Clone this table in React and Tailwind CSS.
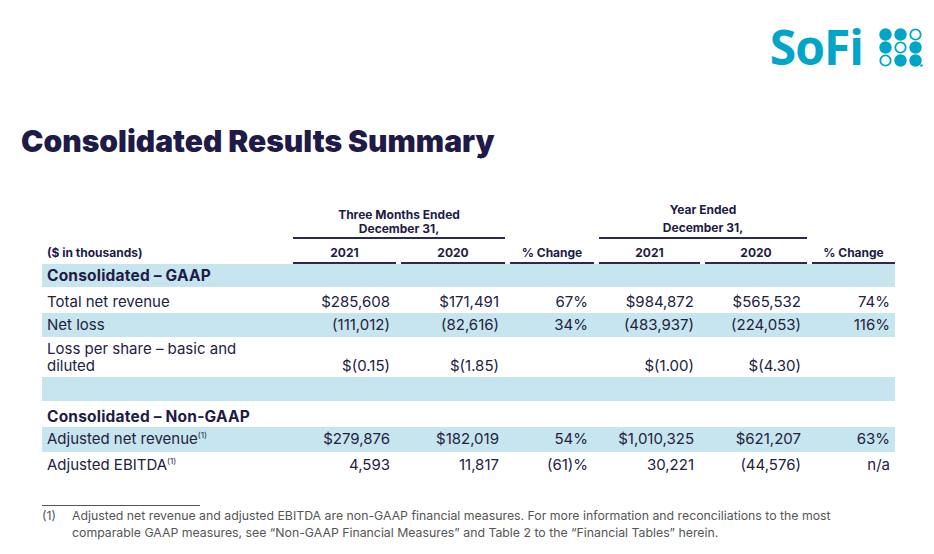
import React from 'react';

const grid = 'grid grid-cols-[246px_103px_104px_84px_101px_102px_83px] gap-x-[5px]';

const rows = [
  { label: 'Total net revenue', values: ['$285,608', '$171,491', '67%', '$984,872', '$565,532', '74%'], h: 'h-[26px] pt-[4px]' },
  { label: 'Net loss', values: ['(111,012)', '(82,616)', '34%', '(483,937)', '(224,053)', '116%'], blue: true, h: 'h-[24px] pt-[1px]' },
];

const nonGaap = [
  { label: 'Adjusted net revenue', sup: true, values: ['$279,876', '$182,019', '54%', '$1,010,325', '$621,207', '63%'], blue: true, h: 'h-[25px]' },
  { label: 'Adjusted EBITDA', sup: true, values: ['4,593', '11,817', '(61)%', '30,221', '(44,576)', 'n/a'], h: 'h-[25px] pt-[2px]' },
];

function Logo() {
  // 3x3 dot grid, o = outlined
  const dots = ['f', 'f', 'o', 'f', 'o', 'f', 'o', 'f', 'f'];
  return (
    <div className="flex items-center gap-[16px]">
      <span className="text-[#00a5c8] text-[48px] font-bold leading-none tracking-[-1px]" style={{ fontFamily: '"Open Sans", sans-serif' }}>
        SoFi
      </span>
      <svg width="44" height="39" viewBox="0 0 44 39">
        {dots.map((d, i) => {
          const cx = 6.5 + (i % 3) * 15;
          const cy = 6.5 + Math.floor(i / 3) * 13;
          return d === 'f' ? (
            <circle key={i} cx={cx} cy={cy} r="6.2" fill="#00a5c8" />
          ) : (
            <circle key={i} cx={cx} cy={cy} r="5.2" fill="none" stroke="#00a5c8" strokeWidth="1.8" />
          );
        })}
        <circle cx="42.5" cy="37.5" r="1.3" fill="#00a5c8" />
      </svg>
    </div>
  );
}

function DataRow({ label, values, blue, h, sup }) {
  return (
    <div className={`${grid} ${h} items-center ${blue ? 'bg-[#c7e5ee]' : ''}`}>
      <div className="pl-[5px] text-[15px]">
        {label}
        {sup && <span className="text-[8px] leading-none align-[6px]">(1)</span>}
      </div>
      {values.map((v, i) => (
        <div key={i} className={`text-right text-[15px] ${i === 5 ? 'pr-[5px]' : 'pr-[6px]'}`}>
          {v}
        </div>
      ))}
    </div>
  );
}

export default function App() {
  return (
    <div className="w-[934px] h-[554px] bg-white text-[#24213f] overflow-hidden" style={{ fontFamily: 'Inter, sans-serif' }}>
      <div className="flex justify-end pt-[23px] pr-[11px]">
        <Logo />
      </div>

      <h1 className="mt-[52px] pl-[21px] text-[30px] leading-[36px] font-black text-[#201a48]">
        Consolidated Results Summary
      </h1>

      <div className="mt-[42px] ml-[42px] w-[853px]">
        <div className={`${grid} text-[12px] font-bold text-[#1e1b45]`}>
          <div />
          <div className="col-span-2 flex flex-col justify-end text-center leading-[14px] border-b-2 border-[#2a2a4a] pb-[1px]">
            <span>Three Months Ended</span>
            <span>December 31,</span>
          </div>
          <div />
          <div className="col-span-2 flex flex-col justify-end text-center leading-[18px] border-b-2 border-[#2a2a4a]">
            <span>Year Ended</span>
            <span>December 31,</span>
          </div>
          <div />
        </div>

        <div className={`${grid} text-[12px] leading-[16px] font-bold text-[#1e1b45]`}>
          <div className="pl-[5px] pt-[6px]">($ in thousands)</div>
          {['2021', '2020', '% Change', '2021', '2020', '% Change'].map((t, i) => (
            <div key={i} className="text-center border-b-2 border-[#2a2a4a] pt-[6px] pb-[1px]">
              {t}
            </div>
          ))}
        </div>

        <div className="bg-[#c7e5ee] h-[23px] flex items-center pl-[5px] text-[15.5px] font-bold tracking-[0.2px] text-[#1e1b45]">
          Consolidated – GAAP
        </div>

        {rows.map((r) => (
          <DataRow key={r.label} {...r} />
        ))}

        <div className={`${grid} items-end h-[40px] pb-[3px]`}>
          <div className="pl-[5px] text-[15px] leading-[17px]">
            Loss per share – basic and
            <br />
            diluted
          </div>
          {['$(0.15)', '$(1.85)', '', '$(1.00)', '$(4.30)', ''].map((v, i) => (
            <div key={i} className="text-right text-[15px] leading-[17px] pr-[6px]">
              {v}
            </div>
          ))}
        </div>

        <div className="bg-[#c7e5ee] h-[24px]" />

        <div className="h-[26px] flex items-center pt-[5px] pl-[5px] text-[15.5px] font-bold tracking-[0.2px] text-[#1e1b45]">
          Consolidated – Non-GAAP
        </div>

        {nonGaap.map((r) => (
          <DataRow key={r.label} {...r} />
        ))}
      </div>

      <div className="ml-[42px] mt-[28px] w-[158px] border-t border-[#555]" />
      <div className="ml-[42px] pt-[1px] flex text-[12.3px] leading-[17px] text-[#555]">
        <span className="w-[30px] shrink-0">(1)</span>
        <p>
          Adjusted net revenue and adjusted EBITDA are non-GAAP financial measures. For more information and reconciliations to the most
          <br />
          comparable GAAP measures, see “Non-GAAP Financial Measures” and Table 2 to the “Financial Tables” herein.
        </p>
      </div>
    </div>
  );
}
